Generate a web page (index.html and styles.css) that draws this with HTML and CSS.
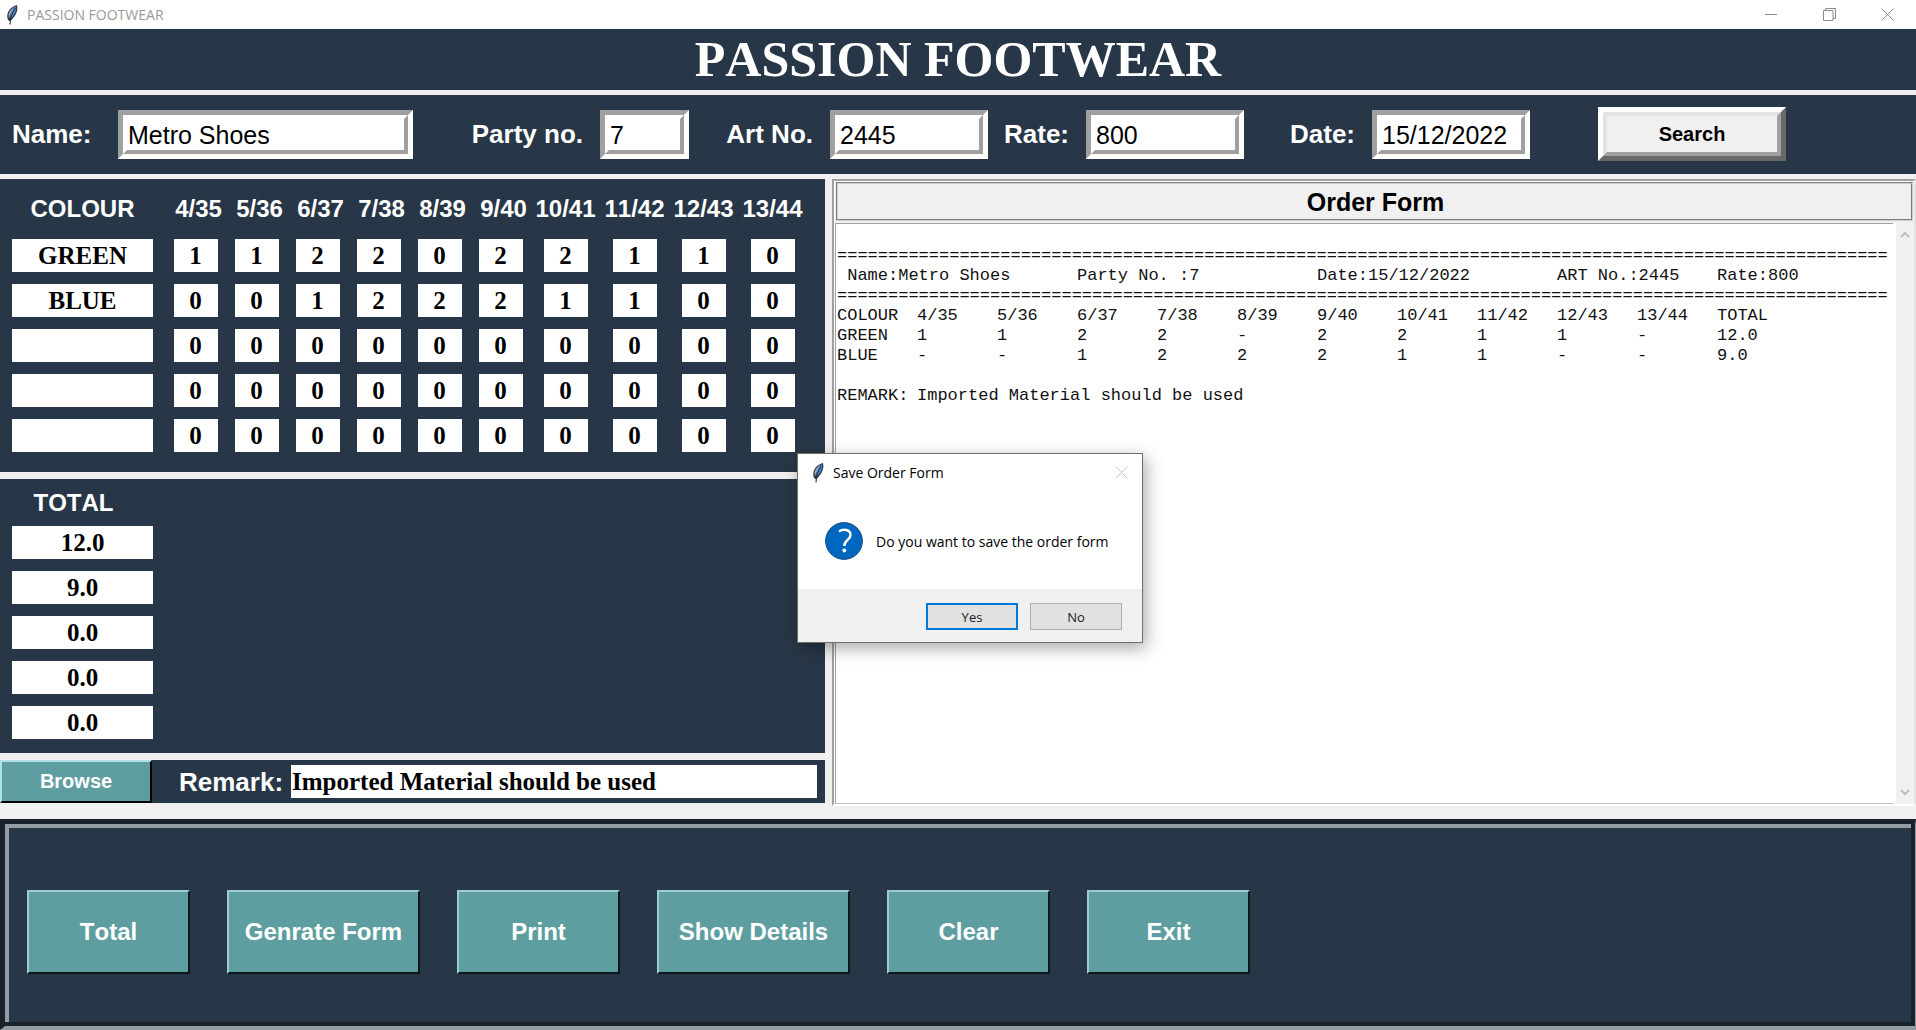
FILE: index.html
```html
<!DOCTYPE html>
<html lang="en">
<head>
<meta charset="utf-8">
<title>PASSION FOOTWEAR</title>
<link rel="stylesheet" href="styles.css">
</head>
<body>
<svg class="defs" aria-hidden="true">
  <symbol id="feather" viewBox="0 0 12 20">
    <path d="M11 0C7 1 2.500 4 1.500 9c-.6 3-.2 5 1.500 7l1 0c3-2 6-6 7-10 .5-2 .5-4 0-6z" fill="#2b3440"/>
    <path d="M10.200 1.200C7 3 5 6 4.500 10l0 4.500C7 12 9.500 8 10.200 4z" fill="#4f8fdc"/>
    <path d="M8.500 1.800C5 3.800 2.800 6.500 2.400 10l.6 3.500C4.500 9 6 5.500 8.500 1.800z" fill="#8fa6bf"/>
    <path d="M9.500 3C6.500 7 4.500 12 4 19.500" fill="none" stroke="#15191f" stroke-width="1"/>
  </symbol>
</svg>

<header class="titlebar">
  <svg class="feather"><use href="#feather"/></svg>
  <span class="titlebar-name">PASSION FOOTWEAR</span>
  <button class="win-btn" type="button" aria-label="Minimize"><svg width="13" height="13" viewBox="0 0 13 13"><path d="M0 6.500h12"/></svg></button>
  <button class="win-btn" type="button" aria-label="Restore"><svg width="13" height="13" viewBox="0 0 13 13"><path d="M.5 2.500h9.500v10H.5zM2.500 2.500v-2h10v10H10"/></svg></button>
  <button class="win-btn" type="button" aria-label="Close"><svg width="13" height="13" viewBox="0 0 13 13"><path d="M.5.5l12 12M12.500.5l-12 12"/></svg></button>
</header>

<h1 class="banner">PASSION FOOTWEAR</h1>

<form class="search-bar">
  <label class="name-label" for="name">Name:</label>
  <span class="groove"><input id="name" type="text" value="Metro Shoes"></span>
  <label for="party">Party no.</label>
  <span class="groove"><input id="party" type="text" value="7"></span>
  <label for="art">Art No.</label>
  <span class="groove"><input id="art" type="text" value="2445"></span>
  <label for="rate">Rate:</label>
  <span class="groove"><input id="rate" type="text" value="800"></span>
  <label for="date">Date:</label>
  <span class="groove"><input id="date" type="text" value="15/12/2022"></span>
  <button class="search-btn" type="button"><span>Search</span></button>
</form>

<main class="work">
  <div class="entry">
    <section class="panel sizes">
      <table class="size-table">
        <colgroup><col class="col-colour"><col span="6" class="col-size"><col span="4" class="col-wide"></colgroup>
        <thead>
          <tr><th>COLOUR</th><th class="short">4/35</th><th class="short">5/36</th><th class="short">6/37</th><th class="short">7/38</th><th class="short">8/39</th><th class="short">9/40</th><th>10/41</th><th>11/42</th><th>12/43</th><th>13/44</th></tr>
        </thead>
        <tbody>
          <tr><td><input class="cell colour" aria-label="Colour 1" value="GREEN"></td><td><input class="cell" aria-label="4/35" value="1"></td><td><input class="cell" aria-label="5/36" value="1"></td><td><input class="cell" aria-label="6/37" value="2"></td><td><input class="cell" aria-label="7/38" value="2"></td><td><input class="cell" aria-label="8/39" value="0"></td><td><input class="cell" aria-label="9/40" value="2"></td><td><input class="cell" aria-label="10/41" value="2"></td><td><input class="cell" aria-label="11/42" value="1"></td><td><input class="cell" aria-label="12/43" value="1"></td><td><input class="cell" aria-label="13/44" value="0"></td></tr>
          <tr><td><input class="cell colour" aria-label="Colour 2" value="BLUE"></td><td><input class="cell" aria-label="4/35" value="0"></td><td><input class="cell" aria-label="5/36" value="0"></td><td><input class="cell" aria-label="6/37" value="1"></td><td><input class="cell" aria-label="7/38" value="2"></td><td><input class="cell" aria-label="8/39" value="2"></td><td><input class="cell" aria-label="9/40" value="2"></td><td><input class="cell" aria-label="10/41" value="1"></td><td><input class="cell" aria-label="11/42" value="1"></td><td><input class="cell" aria-label="12/43" value="0"></td><td><input class="cell" aria-label="13/44" value="0"></td></tr>
          <tr><td><input class="cell colour" aria-label="Colour 3" value=""></td><td><input class="cell" aria-label="4/35" value="0"></td><td><input class="cell" aria-label="5/36" value="0"></td><td><input class="cell" aria-label="6/37" value="0"></td><td><input class="cell" aria-label="7/38" value="0"></td><td><input class="cell" aria-label="8/39" value="0"></td><td><input class="cell" aria-label="9/40" value="0"></td><td><input class="cell" aria-label="10/41" value="0"></td><td><input class="cell" aria-label="11/42" value="0"></td><td><input class="cell" aria-label="12/43" value="0"></td><td><input class="cell" aria-label="13/44" value="0"></td></tr>
          <tr><td><input class="cell colour" aria-label="Colour 4" value=""></td><td><input class="cell" aria-label="4/35" value="0"></td><td><input class="cell" aria-label="5/36" value="0"></td><td><input class="cell" aria-label="6/37" value="0"></td><td><input class="cell" aria-label="7/38" value="0"></td><td><input class="cell" aria-label="8/39" value="0"></td><td><input class="cell" aria-label="9/40" value="0"></td><td><input class="cell" aria-label="10/41" value="0"></td><td><input class="cell" aria-label="11/42" value="0"></td><td><input class="cell" aria-label="12/43" value="0"></td><td><input class="cell" aria-label="13/44" value="0"></td></tr>
          <tr><td><input class="cell colour" aria-label="Colour 5" value=""></td><td><input class="cell" aria-label="4/35" value="0"></td><td><input class="cell" aria-label="5/36" value="0"></td><td><input class="cell" aria-label="6/37" value="0"></td><td><input class="cell" aria-label="7/38" value="0"></td><td><input class="cell" aria-label="8/39" value="0"></td><td><input class="cell" aria-label="9/40" value="0"></td><td><input class="cell" aria-label="10/41" value="0"></td><td><input class="cell" aria-label="11/42" value="0"></td><td><input class="cell" aria-label="12/43" value="0"></td><td><input class="cell" aria-label="13/44" value="0"></td></tr>
        </tbody>
      </table>
    </section>

    <section class="panel totals">
      <div class="totals-list">
        <h2>TOTAL</h2>
        <input class="cell colour" aria-label="Total 1" value="12.0">
        <input class="cell colour" aria-label="Total 2" value="9.0">
        <input class="cell colour" aria-label="Total 3" value="0.0">
        <input class="cell colour" aria-label="Total 4" value="0.0">
        <input class="cell colour" aria-label="Total 5" value="0.0">
      </div>
    </section>

    <section class="panel remark">
      <button class="browse" type="button">Browse</button>
      <label for="remark">Remark:</label>
      <input class="cell" id="remark" type="text" value="Imported Material should be used">
    </section>
  </div>

  <section class="order">
    <h2 class="order-title">Order Form</h2>
    <div class="order-body">
      <textarea class="sheet" aria-label="Order Form" wrap="off" spellcheck="false">

=======================================================================================================
 Name:Metro Shoes	Party No. :7		Date:15/12/2022		ART No.:2445	Rate:800
=======================================================================================================
COLOUR	4/35	5/36	6/37	7/38	8/39	9/40	10/41	11/42	12/43	13/44	TOTAL
GREEN	1	1	2	2	-	2	2	1	1	-	12.0
BLUE	-	-	1	2	2	2	1	1	-	-	9.0

REMARK:	Imported Material should be used</textarea>
      <div class="scrollbar">
        <svg width="10" height="8" viewBox="0 0 10 8"><path d="M1 6l4-4 4 4"/></svg>
        <svg width="10" height="8" viewBox="0 0 10 8"><path d="M1 2l4 4 4-4"/></svg>
      </div>
    </div>
  </section>
</main>

<footer class="actions">
  <button class="action" type="button">Total</button>
  <button class="action long" type="button">Genrate Form</button>
  <button class="action" type="button">Print</button>
  <button class="action long" type="button">Show Details</button>
  <button class="action" type="button">Clear</button>
  <button class="action" type="button">Exit</button>
</footer>

<div class="dialog" role="dialog" aria-labelledby="dlg-title">
  <div class="dialog-bar">
    <svg class="feather"><use href="#feather"/></svg>
    <span class="dialog-title" id="dlg-title">Save Order Form</span>
    <button class="dialog-close" type="button" aria-label="Close"><svg width="13" height="13" viewBox="0 0 13 13"><path d="M.5.5l12 12M12.500.5l-12 12"/></svg></button>
  </div>
  <div class="dialog-body">
    <svg width="38" height="38" viewBox="0 0 38 38">
      <circle cx="19" cy="19" r="18.400" fill="#0067c0" stroke="#1a4f80" stroke-width="1"/>
      <path d="M14 9.500C18 6.500 25.500 7.500 25.500 13C25.500 18 19.300 18 19.300 24" fill="none" stroke="#fff" stroke-width="2.500"/>
      <circle cx="19.300" cy="28.500" r="1.900" fill="#fff"/>
    </svg>
    <p>Do you want to save the order form</p>
  </div>
  <div class="dialog-actions">
    <button class="dlg-btn default" type="button">Yes</button>
    <button class="dlg-btn" type="button">No</button>
  </div>
</div>
</body>
</html>
```
FILE: styles.css
```css
:root {
  --navy: #283747;
  --teal: #5f9ea0;
  --face: #f0f0f0;
  --shade: #a0a0a0;
  --sans: "Liberation Sans", Arial, sans-serif;
  --serif: "Liberation Serif", "Times New Roman", serif;
  --ui: "Open Sans", "Noto Sans", sans-serif;
}

* { box-sizing: border-box; }

body {
  margin: 0;
  min-height: 100vh;
  display: flex;
  flex-direction: column;
  background: var(--face);
  font-family: var(--sans);
  font-kerning: none;
  position: relative;
}

h1, h2, p { margin: 0; }
input, textarea, button { font: inherit; font-kerning: none; margin: 0; padding: 0; border: 0; border-radius: 0; }
.defs { position: absolute; width: 0; height: 0; }

/* Window title bar */
.titlebar {
  display: flex;
  align-items: center;
  height: 29px;
  padding-left: 6px;
  background: #fff;
  font: 14px/20px var(--ui);
  color: #999;
}
.feather { width: 12px; height: 20px; flex: none; }
.titlebar-name { flex: 1; padding-left: 9px; }
.win-btn { width: 58px; height: 29px; background: none; display: grid; place-items: center; }
.win-btn path, .dialog-close path { fill: none; stroke: #8c8c8c; stroke-width: 1; }

.banner {
  background: var(--navy);
  color: #fff;
  text-align: center;
  font: bold 50px/61px var(--serif);
  font-kerning: none;
  margin-bottom: 5px;
}

/* Order lookup fields */
.search-bar {
  display: grid;
  grid-template-columns: 106px 295px 187px 89px 141px 158px 98px 158px 128px 158px 1fr;
  align-items: center;
  padding: 12px 0 13px 12px;
  margin-bottom: 5px;
  background: var(--navy);
  color: #fff;
}
.search-bar label { font-size: 26px; line-height: 30px; font-weight: bold; text-align: right; padding-right: 17px; }
.search-bar .name-label { text-align: left; padding: 0; }
.groove {
  display: block;
  border: 5px solid;
  border-color: var(--shade) #fff #fff var(--shade);
}
.groove input {
  display: block;
  width: 100%;
  height: 39px;
  padding: 2px 1px 0;
  border: 4px solid;
  border-color: #fff var(--shade) var(--shade) #fff;
  font-size: 25px;
  color: #000;
  background: #fff;
}
.search-btn {
  justify-self: start;
  width: 188px;
  margin-left: 68px;
  border: 5px solid;
  border-color: #fff #696969 #696969 #fff;
  font-size: 20px;
  font-weight: bold;
  color: #000;
}
.search-btn span {
  display: block;
  border: 4px solid;
  border-color: #e3e3e3 var(--shade) var(--shade) #e3e3e3;
  background: var(--face);
  line-height: 36px;
}

/* Work area */
.work { display: grid; grid-template-columns: auto 1fr; gap: 7px; margin-bottom: 13px; }
.entry { display: flex; flex-direction: column; gap: 7px; padding-bottom: 3px; }
.panel { background: var(--navy); color: #fff; }
.sizes { padding: 6px 18px 14px 0; }
.size-table { width: 807px; table-layout: fixed; border-collapse: collapse; }
.col-colour { width: 165px; }
.col-size { width: 61px; }
.col-wide { width: 69px; }
.size-table th { height: 48px; padding: 0; font-size: 24px; line-height: 28px; }
.size-table .short { padding-left: 6px; }
.size-table td { height: 45px; padding: 0; text-align: center; }
.cell {
  width: 44px;
  height: 33px;
  background: #fff;
  color: #000;
  font: bold 25px/33px var(--serif);
  text-align: center;
  vertical-align: middle;
}
.cell.colour { width: 141px; }

.totals { padding: 10px 0 14px; }
.totals-list { width: 165px; display: flex; flex-direction: column; align-items: center; gap: 12px; }
.totals-list h2 { font-size: 24px; line-height: 28px; margin-bottom: -3px; padding-right: 18px; }

.remark { display: flex; align-items: center; padding-right: 8px; }
.remark label { font-size: 26px; line-height: 30px; font-weight: bold; padding: 0 8px 0 27px; }
.remark .cell { flex: 1; text-align: left; padding-left: 1px; }
.browse {
  width: 152px;
  height: 43px;
  background: var(--teal);
  color: #fff;
  font-size: 20px;
  font-weight: bold;
  border: 2px solid;
  border-color: #b0e0e2 #000 #000 #b0e0e2;
}

/* Order sheet */
.order {
  display: flex;
  flex-direction: column;
  border: 2px solid;
  border-color: var(--shade) #e3e3e3 #fff var(--shade);
  box-shadow: inset 1px 1px #fff;
  padding: 1px 1px 0;
}
.order-title {
  margin: 0 0 2px 1px;
  border: 2px groove #d0d0d0;
  background: var(--face);
  color: #000;
  text-align: center;
  font-size: 25px;
  line-height: 33px;
  padding: 2px 0 0 2px;
}
.order-body { flex: 1; display: flex; }
.sheet {
  flex: 1;
  min-width: 0;
  resize: none;
  overflow: hidden;
  border-top: 1px solid var(--shade);
  border-left: 1px solid var(--shade);
  border-bottom: 1px solid #c0c0c0;
  padding: 2px 0 0 1px;
  background: #fff;
  color: #111;
  font-family: "Liberation Mono", "Courier New", monospace;
  font-size: 17px;
  line-height: 20px;
  tab-size: 80px;
}
.scrollbar {
  width: 20px;
  padding: 8px 0;
  border-left: 3px solid #fff;
  background: var(--face);
  display: flex;
  flex-direction: column;
  justify-content: space-between;
  align-items: center;
}
.scrollbar path { fill: none; stroke: #bdbdbd; stroke-width: 2; }

/* Action bar */
.actions {
  flex: 1;
  display: flex;
  align-items: flex-start;
  gap: 37px;
  padding: 66px 18px 47px 22px;
  background: var(--navy);
  border: solid;
  border-width: 5px 1px 4px 5px;
  border-color: #19222c #949ba3 #949ba3 #19222c;
  box-shadow: inset -4px -4px #19222c, inset 4px 4px #949ba3;
}
.action {
  width: 163px;
  height: 84px;
  background: var(--teal);
  color: #fff;
  font-size: 24px;
  font-weight: bold;
  border: 2px solid;
  border-color: #9ccdd3 #0c1718 #0c1718 #9ccdd3;
}
.action.long { width: 193px; }

/* Confirmation dialog */
.dialog {
  position: absolute;
  left: calc(50% - 161px);
  top: 453px;
  width: 346px;
  background: #fff;
  border: 1px solid #6b706b;
  box-shadow: 3px 5px 16px rgba(0, 0, 0, .35);
  font-family: var(--ui);
  color: #000;
}
.dialog-bar { display: flex; align-items: center; height: 37px; padding: 0 14px; font-size: 14px; }
.dialog-title { flex: 1; padding-left: 9px; }
.dialog-close { width: 13px; height: 13px; background: none; display: grid; }
.dialog-close path { stroke: #c4c4c4; }
.dialog-body { display: flex; align-items: center; gap: 13px; height: 98px; padding: 2px 26px 0 27px; font-size: 14px; white-space: nowrap; }
.dialog-actions { display: flex; justify-content: flex-end; gap: 12px; padding: 14px 20px 12px; background: var(--face); }
.dlg-btn { width: 92px; height: 27px; background: #e1e1e1; border: 1px solid #adadad; font-size: 13px; color: #1a1a1a; }
.dlg-btn.default { border: 2px solid #0078d7; }
```
